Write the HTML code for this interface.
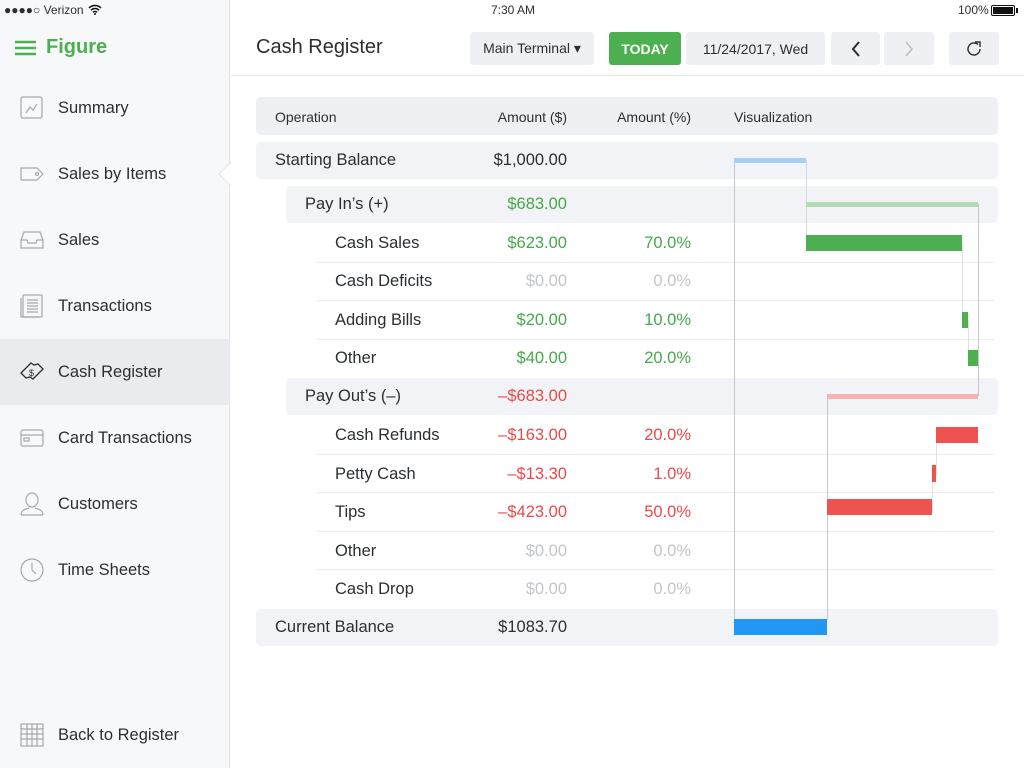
<!DOCTYPE html>
<html><head><meta charset="utf-8"><style>
*{margin:0;padding:0;box-sizing:border-box}
body{width:1024px;height:768px;position:relative;overflow:hidden;font-family:"Liberation Sans",sans-serif;background:#fff;color:#2b2f33}
.abs{position:absolute}
#side{left:0;top:0;width:230px;height:768px;background:#f7f8fa;border-right:1px solid #e3e5e8}
.nav{position:absolute;left:0;width:230px;height:66px;display:flex;align-items:center;font-size:16.5px;color:#2b2f33}
.nav svg{position:absolute;left:20px}
.nav span{position:absolute;left:58px}
.t{position:absolute;font-size:16.5px;white-space:nowrap}
.r{text-align:right}
.g{color:#45a84a}.rd{color:#e84a4a}.gr{color:#c2c5c9}
.btn{position:absolute;top:32px;height:33px;background:#eef0f3;border-radius:3px;font-size:14px;display:flex;align-items:center;justify-content:center;color:#2b2f33}
.bar{position:absolute}
.vl{position:absolute;width:1px;background:#c4c7cc}
.sep{position:absolute;left:316px;width:678px;height:1px;background:#ebedf0}
</style></head><body>
<div id="side" class="abs"></div>
<div class="t" style="left:4px;top:3px;font-size:12px">●●●●○ Verizon</div>
<svg class="abs" style="left:88px;top:4px" width="14" height="11" viewBox="0 0 14 11"><path d="M1 4a8.5 8.5 0 0 1 12 0M3 6.2a5.5 5.5 0 0 1 8 0M5 8.4a2.6 2.6 0 0 1 4 0" stroke="#111" stroke-width="1.5" fill="none"/><circle cx="7" cy="10" r="1" fill="#111"/></svg>
<div class="t" style="left:491px;top:3px;font-size:12px">7:30 AM</div>
<div class="t" style="left:958px;top:3px;font-size:12px">100%</div>
<div class="abs" style="left:991px;top:5px;width:24px;height:11px;border:1px solid #111;border-radius:2px;padding:1px"><div style="background:#111;width:100%;height:100%"></div></div>
<div class="abs" style="left:1016px;top:8px;width:2px;height:5px;background:#111"></div>

<svg class="abs" style="left:15px;top:40px" width="21" height="16"><path d="M0 2h21M0 8h21M0 14h21" stroke="#4caf50" stroke-width="2.5"/></svg>
<div class="t" style="left:46px;top:36px;font-size:20px;font-weight:bold;color:#4caf50">Figure</div>

<div class="nav" style="top:75px"><svg width="24" height="24" viewBox="0 0 24 24" fill="none" stroke="#a4a8ad" stroke-width="1.2"><rect x="1" y="1" width="21" height="21" rx="2"/><path d="M6 17l4-6 3 3 4-6"/></svg><span>Summary</span></div>
<div class="nav" style="top:141px"><svg width="24" height="24" viewBox="0 0 24 24" fill="none" stroke="#a4a8ad" stroke-width="1.2"><path d="M1 6h16l6 6-6 6H1z"/><circle cx="17" cy="12" r="1.5"/></svg><span>Sales by Items</span></div>
<div class="nav" style="top:207px"><svg width="24" height="24" viewBox="0 0 24 24" fill="none" stroke="#a4a8ad" stroke-width="1.2"><path d="M1 12l3-8h16l3 8v8H1zM1 12h6l1 3h8l1-3h6"/></svg><span>Sales</span></div>
<div class="nav" style="top:273px"><svg width="24" height="24" viewBox="0 0 24 24" fill="none" stroke="#a4a8ad" stroke-width="1.2"><rect x="3" y="1" width="19" height="22" rx="1"/><path d="M1 4v19h18M7 6h11M7 9h11M7 12h11M7 15h11M7 18h11"/></svg><span>Transactions</span></div>
<div class="nav" style="top:339px;background:#e9ebee"><svg width="24" height="24" viewBox="0 0 24 24" fill="none" stroke="#2b2f33" stroke-width="1.3"><path d="M1 13l10-10 3 2 4-1 5 5-10 10-3-2-4 1z"/><text x="9" y="16" font-size="9" fill="#2b2f33" stroke="none" font-family="Liberation Sans">$</text></svg><span>Cash Register</span></div>
<div class="nav" style="top:405px"><svg width="24" height="24" viewBox="0 0 24 24" fill="none" stroke="#a4a8ad" stroke-width="1.2"><rect x="1" y="4" width="22" height="16" rx="2"/><path d="M1 9h22"/><rect x="4" y="12" width="5" height="3"/></svg><span>Card Transactions</span></div>
<div class="nav" style="top:471px"><svg width="24" height="24" viewBox="0 0 24 24" fill="none" stroke="#a4a8ad" stroke-width="1.2"><ellipse cx="12" cy="8" rx="6" ry="7"/><path d="M1 23c0-5 5-6 8-7M23 23c0-5-5-6-8-7M1 23h22"/></svg><span>Customers</span></div>
<div class="nav" style="top:537px"><svg width="24" height="24" viewBox="0 0 24 24" fill="none" stroke="#a4a8ad" stroke-width="1.2"><circle cx="12" cy="12" r="11"/><path d="M12 5v7l4 4"/></svg><span>Time Sheets</span></div>
<div class="nav" style="top:702px"><svg width="24" height="24" viewBox="0 0 24 24" fill="none" stroke="#a4a8ad" stroke-width="1.2"><rect x="1" y="1" width="22" height="22"/><path d="M7 1v22M12 1v22M17 1v22M1 6h22M1 11h22M1 16h22"/></svg><span>Back to Register</span></div>
<svg class="abs" style="left:218px;top:162px" width="13" height="24"><path d="M13 0L1 12l12 12" fill="#fff" stroke="#e3e5e8"/></svg>

<div class="abs" style="left:231px;top:75px;width:793px;height:1px;background:#e6e8eb"></div>
<div class="t" style="left:256px;top:36px;font-size:20px">Cash Register</div>
<div class="btn" style="left:470px;width:124px">Main Terminal ▾</div>
<div class="btn" style="left:609px;width:72px;background:#4caf50;color:#fff;font-weight:bold">TODAY</div>
<div class="btn" style="left:686px;width:139px">11/24/2017, Wed</div>
<div class="btn" style="left:831px;width:49px"><svg width="10" height="16"><path d="M8 1L2 8l6 7" stroke="#2b2f33" stroke-width="2" fill="none"/></svg></div>
<div class="btn" style="left:884px;width:50px"><svg width="10" height="16"><path d="M2 1l6 7-6 7" stroke="#bbb" stroke-width="1.5" fill="none"/></svg></div>
<div class="btn" style="left:949px;width:50px"><svg width="18" height="18" viewBox="0 0 18 18"><path d="M15 9a6 6 0 1 1-2-4.5" stroke="#2b2f33" stroke-width="1.4" fill="none"/><path d="M10 2h5v5" stroke="#2b2f33" stroke-width="1.4" fill="none"/></svg></div>

<div class="abs" style="left:256px;top:97px;width:742px;height:38px;background:#eef0f3;border-radius:5px"></div>
<div class="t" style="left:275px;top:109px;font-size:14px">Operation</div>
<div class="t r" style="left:467px;width:100px;top:109px;font-size:14px">Amount ($)</div>
<div class="t r" style="left:591px;width:100px;top:109px;font-size:14px">Amount (%)</div>
<div class="t" style="left:734px;top:109px;font-size:14px">Visualization</div>

<div class="abs" style="left:256px;top:142px;width:742px;height:37px;background:#f2f3f6;border-radius:5px"></div>
<div class="abs" style="left:286px;top:186px;width:712px;height:37px;background:#f2f3f6;border-radius:5px"></div>
<div class="abs" style="left:286px;top:378px;width:712px;height:37px;background:#f2f3f6;border-radius:5px"></div>
<div class="abs" style="left:256px;top:609px;width:742px;height:37px;background:#f2f3f6;border-radius:5px"></div>

<div class="sep" style="top:262px"></div><div class="sep" style="top:300px"></div><div class="sep" style="top:339px"></div>
<div class="sep" style="top:454px"></div><div class="sep" style="top:492px"></div><div class="sep" style="top:531px"></div><div class="sep" style="top:569px"></div>

<div class="t" style="left:275px;top:151px">Starting Balance</div><div class="t r" style="left:417px;width:150px;top:151px">$1,000.00</div>
<div class="t" style="left:305px;top:195px">Pay In’s (+)</div><div class="t r g" style="left:417px;width:150px;top:195px">$683.00</div>
<div class="t" style="left:335px;top:234px">Cash Sales</div><div class="t r g" style="left:417px;width:150px;top:234px">$623.00</div><div class="t r g" style="left:591px;width:100px;top:234px">70.0%</div>
<div class="t" style="left:335px;top:272px">Cash Deficits</div><div class="t r gr" style="left:417px;width:150px;top:272px">$0.00</div><div class="t r gr" style="left:591px;width:100px;top:272px">0.0%</div>
<div class="t" style="left:335px;top:311px">Adding Bills</div><div class="t r g" style="left:417px;width:150px;top:311px">$20.00</div><div class="t r g" style="left:591px;width:100px;top:311px">10.0%</div>
<div class="t" style="left:335px;top:349px">Other</div><div class="t r g" style="left:417px;width:150px;top:349px">$40.00</div><div class="t r g" style="left:591px;width:100px;top:349px">20.0%</div>
<div class="t" style="left:305px;top:387px">Pay Out’s (–)</div><div class="t r rd" style="left:417px;width:150px;top:387px">–$683.00</div>
<div class="t" style="left:335px;top:426px">Cash Refunds</div><div class="t r rd" style="left:417px;width:150px;top:426px">–$163.00</div><div class="t r rd" style="left:591px;width:100px;top:426px">20.0%</div>
<div class="t" style="left:335px;top:465px">Petty Cash</div><div class="t r rd" style="left:417px;width:150px;top:465px">–$13.30</div><div class="t r rd" style="left:591px;width:100px;top:465px">1.0%</div>
<div class="t" style="left:335px;top:503px">Tips</div><div class="t r rd" style="left:417px;width:150px;top:503px">–$423.00</div><div class="t r rd" style="left:591px;width:100px;top:503px">50.0%</div>
<div class="t" style="left:335px;top:542px">Other</div><div class="t r gr" style="left:417px;width:150px;top:542px">$0.00</div><div class="t r gr" style="left:591px;width:100px;top:542px">0.0%</div>
<div class="t" style="left:335px;top:580px">Cash Drop</div><div class="t r gr" style="left:417px;width:150px;top:580px">$0.00</div><div class="t r gr" style="left:591px;width:100px;top:580px">0.0%</div>
<div class="t" style="left:275px;top:618px">Current Balance</div><div class="t r" style="left:417px;width:150px;top:618px">$1083.70</div>

<div class="vl" style="left:734px;top:160px;height:460px"></div>
<div class="vl" style="left:806px;top:160px;height:90px;background:#d6d8db"></div>
<div class="vl" style="left:978px;top:204px;height:192px"></div>
<div class="vl" style="left:827px;top:396px;height:224px"></div>
<div class="vl" style="left:962px;top:243px;height:80px;background:#dfe1e4"></div>
<div class="vl" style="left:968px;top:320px;height:40px;background:#dfe1e4"></div>
<div class="vl" style="left:936px;top:435px;height:40px;background:#dfe1e4"></div>
<div class="vl" style="left:932px;top:474px;height:38px;background:#dfe1e4"></div>
<div class="bar" style="left:734px;top:158px;width:72px;height:5px;background:#a5cff5"></div>
<div class="bar" style="left:806px;top:202px;width:172px;height:5px;background:#b2dcb3"></div>
<div class="bar" style="left:806px;top:235px;width:156px;height:16px;background:#4caf50"></div>
<div class="bar" style="left:962px;top:312px;width:6px;height:16px;background:#4caf50"></div>
<div class="bar" style="left:968px;top:350px;width:10px;height:16px;background:#4caf50"></div>
<div class="bar" style="left:827px;top:394px;width:151px;height:5px;background:#f7b3b3"></div>
<div class="bar" style="left:936px;top:427px;width:42px;height:16px;background:#ef5350"></div>
<div class="bar" style="left:932px;top:465px;width:4px;height:17px;background:#ef5350"></div>
<div class="bar" style="left:827px;top:499px;width:105px;height:16px;background:#ef5350"></div>
<div class="bar" style="left:734px;top:619px;width:93px;height:16px;background:#2196f3"></div>
</body></html>
